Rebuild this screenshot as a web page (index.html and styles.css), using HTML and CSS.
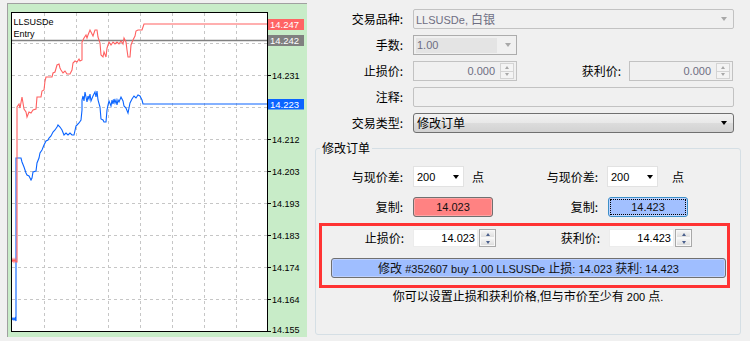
FILE: index.html
```html
<!DOCTYPE html>
<html lang="zh">
<head>
<meta charset="utf-8">
<title>修改订单</title>
<link rel="stylesheet" href="styles.css">
</head>
<body>
<div class="app">
  <div class="chart">
    <svg class="chart-svg" width="299" height="333" viewBox="8 4 299 333" xmlns="http://www.w3.org/2000/svg">
      <rect x="11.5" y="12.5" width="256" height="319" fill="#fff" stroke="none"/>
      <g stroke="#c6c6c6" stroke-width="1" stroke-dasharray="3 3">
        <line x1="44.5" y1="13" x2="44.5" y2="331"/>
        <line x1="76.5" y1="13" x2="76.5" y2="331"/>
        <line x1="108.5" y1="13" x2="108.5" y2="331"/>
        <line x1="140.5" y1="13" x2="140.5" y2="331"/>
        <line x1="172.5" y1="13" x2="172.5" y2="331"/>
        <line x1="204.5" y1="13" x2="204.5" y2="331"/>
        <line x1="236.5" y1="13" x2="236.5" y2="331"/>
        <line x1="12" y1="43.5" x2="267" y2="43.5"/>
        <line x1="12" y1="75.5" x2="267" y2="75.5"/>
        <line x1="12" y1="107.5" x2="267" y2="107.5"/>
        <line x1="12" y1="139.5" x2="267" y2="139.5"/>
        <line x1="12" y1="171.5" x2="267" y2="171.5"/>
        <line x1="12" y1="203.5" x2="267" y2="203.5"/>
        <line x1="12" y1="235.5" x2="267" y2="235.5"/>
        <line x1="12" y1="267.5" x2="267" y2="267.5"/>
        <line x1="12" y1="299.5" x2="267" y2="299.5"/>
      </g>
      <line x1="12" y1="40.5" x2="267" y2="40.5" stroke="#808080" stroke-width="1.3"/>
      <polyline fill="none" stroke="#0a64ff" stroke-width="1.1" points="12,320 13,318 14,320 15,318 16,321 16,158 21,158 22,162 24,167 26,173 27,175 29,176 31,180 32,178 33,172 36,171 37,163 39,158 40,153 42,150 44,145 46,141 48,140 49,138 51,136 53,132 55,130 57,127 58,125 60,127 62,130 64,135 66,133 68,135 70,133 72,135 74,135 76,126 77,125 79,123 81,120 82,110 82,100 83,96 84,101 85,92 86,97 87,102 88,96 89,99 90,94 91,101 93,96 95,92 96,97 97,91 98,100 100,107 101,119 103,120 104,122 106,122 107,110 108,105 109,101 111,106 112,100 113,104 114,99 115,103 116,100 117,105 118,100 119,102 121,97 123,101 124,106 126,108 128,113 130,103 132,99 134,96 136,98 138,95 140,96 141,98 142,100 143,104 267,104"/>
      <polyline fill="none" stroke="#ff6060" stroke-width="1.1" points="12,262 13,259 14,262 15,259 16,262 17,262 17,107 19,104 20,108 22,97 23,103 24,109 26,112 27,117 29,112 31,113 33,110 36,109 37,97 41,97 42,91 44,90 45,81 46,77 52,77 53,73 55,72 57,65 59,64 60,68 61,70 63,73 65,71 67,74 70,74 72,70 73,63 75,61 77,62 79,59 80,61 82,60 82,42 84,38 86,35 87,38 88,35 90,30 92,34 93,36 95,30 97,30 98,37 100,43 101,55 103,57 104,52 106,57 107,48 109,42 111,45 113,42 115,44 117,42 119,44 121,41 123,44 124,38 126,42 127,50 128,57 130,57 131,45 133,40 135,36 136,31 138,30 142,30 144,24 267,24"/>
      <rect x="11.5" y="12.5" width="256" height="319" fill="none" stroke="#000" stroke-width="1"/>
      <g stroke="#000" stroke-width="1">
        <line x1="268" y1="43.5" x2="271" y2="43.5"/>
        <line x1="268" y1="75.5" x2="271" y2="75.5"/>
        <line x1="268" y1="107.5" x2="271" y2="107.5"/>
        <line x1="268" y1="139.5" x2="271" y2="139.5"/>
        <line x1="268" y1="171.5" x2="271" y2="171.5"/>
        <line x1="268" y1="203.5" x2="271" y2="203.5"/>
        <line x1="268" y1="235.5" x2="271" y2="235.5"/>
        <line x1="268" y1="267.5" x2="271" y2="267.5"/>
        <line x1="268" y1="299.5" x2="271" y2="299.5"/>
        <line x1="268" y1="331.5" x2="271" y2="331.5"/>
      </g>
      <g class="axis">
        <text x="272" y="79">14.231</text>
        <text x="272" y="143">14.212</text>
        <text x="272" y="175">14.203</text>
        <text x="272" y="207">14.193</text>
        <text x="272" y="239">14.183</text>
        <text x="272" y="271">14.174</text>
        <text x="272" y="303">14.164</text>
        <text x="272" y="333">14.155</text>
      </g>
      <text class="axis" x="13.5" y="24.5">LLSUSDe</text>
      <text class="axis" x="13.5" y="37">Entry</text>
      <rect x="268" y="19" width="36" height="11" fill="#ff6464"/>
      <text class="tag" x="270" y="28">14.247</text>
      <rect x="268" y="35" width="36" height="11" fill="#808080"/>
      <text class="tag" x="270" y="44">14.242</text>
      <rect x="268" y="99" width="36" height="10.5" fill="#0a64ff"/>
      <text class="tag" x="270" y="108">14.223</text>
    </svg>
  </div>

  <div class="form">
    <div class="row">
      <span class="lbl">交易品种:</span>
      <div class="field combo-off w-wide">
        <span class="dis-text">LLSUSDe, <span class="zh">白银</span></span>
        <span class="tri tri-gray"></span>
      </div>
    </div>
    <div class="row">
      <span class="lbl">手数:</span>
      <div class="field combo-qty">
        <span class="qty-box dis-text">1.00</span>
        <span class="tri tri-gray"></span>
      </div>
    </div>
    <div class="row">
      <span class="lbl">止损价:</span>
      <div class="field spin-off">
        <span class="spin-val dis-text">0.000</span>
        <span class="spin-btns off"><span class="sb"><i class="tri-up"></i></span><span class="sb"><i class="tri-dn"></i></span></span>
      </div>
      <span class="lbl lbl-r">获利价:</span>
      <div class="field spin-off">
        <span class="spin-val dis-text">0.000</span>
        <span class="spin-btns off"><span class="sb"><i class="tri-up"></i></span><span class="sb"><i class="tri-dn"></i></span></span>
      </div>
    </div>
    <div class="row">
      <span class="lbl">注释:</span>
      <div class="field input-off w-wide"></div>
    </div>
    <div class="row">
      <span class="lbl">交易类型:</span>
      <div class="field combo-on w-wide">
        <span class="zh">修改订单</span>
        <span class="tri tri-black"></span>
      </div>
    </div>

    <fieldset class="group">
      <legend class="zh">修改订单</legend>
      <div class="grow row-a">
        <span class="lbl g1">与现价差:</span>
        <div class="field combo-white"><span>200</span><span class="tri tri-black"></span></div>
        <span class="lbl pt">点</span>
        <span class="lbl g2">与现价差:</span>
        <div class="field combo-white"><span>200</span><span class="tri tri-black"></span></div>
        <span class="lbl pt2">点</span>
      </div>
      <div class="grow row-b">
        <span class="lbl g1">复制:</span>
        <button class="btn btn-red" type="button">14.023</button>
        <span class="lbl g3">复制:</span>
        <button class="btn btn-blue" type="button"><span class="focus">14.423</span></button>
      </div>
      <div class="highlight">
        <div class="grow row-c">
          <span class="lbl g4">止损价:</span>
          <div class="spin-on">
            <span class="spin-input">14.023</span>
            <span class="spin-btns on"><span class="sb"><i class="tri-up"></i></span><span class="sb"><i class="tri-dn"></i></span></span>
          </div>
          <span class="lbl g5">获利价:</span>
          <div class="spin-on">
            <span class="spin-input">14.423</span>
            <span class="spin-btns on"><span class="sb"><i class="tri-up"></i></span><span class="sb"><i class="tri-dn"></i></span></span>
          </div>
        </div>
        <button class="btn btn-main" type="button"><span class="zh">修改</span> #352607 buy 1.00 LLSUSDe <span class="zh">止损</span>: 14.023 <span class="zh">获利</span>: 14.423</button>
      </div>
      <p class="note"><span class="zh">你可以设置止损和获利价格</span>,<span class="zh">但与市价至少有</span> 200 <span class="zh">点</span>.</p>
    </fieldset>
  </div>
</div>
</body>
</html>
```

FILE: styles.css
```css
* { box-sizing: border-box; }
html, body { margin: 0; padding: 0; }
body {
  width: 750px;
  height: 341px;
  overflow: hidden;
  background: #f0f0f0;
  color: #000;
  font-family: "Liberation Sans", "Noto Sans CJK SC", sans-serif;
  font-size: 11px;
  line-height: 14px;
}
.app { display: flex; align-items: flex-start; }

/* chart */
.chart {
  flex: none;
  margin: 3px 0 0 7px;
  width: 300px;
  height: 334px;
  border-top: 1px solid #a0a0a0;
  border-left: 1px solid #a0a0a0;
  background: #c8ecc8;
}
.chart-svg { display: block; }
.axis { font-family: "Liberation Sans", sans-serif; font-size: 9px; fill: #000; }
.tag { font-family: "Liberation Sans", sans-serif; font-size: 9.5px; fill: #fff; }

/* form */
.form {
  flex: none;
  width: 443px;
  padding-top: 9px;
  display: flex;
  flex-direction: column;
}
.zh { font-family: "Noto Sans CJK SC", sans-serif; font-size: 12px; }
.row { display: flex; align-items: center; height: 20px; margin-bottom: 6px; }
.lbl {
  flex: none;
  font-family: "Noto Sans CJK SC", sans-serif;
  font-size: 12px;
  line-height: 16px;
  text-align: right;
  white-space: nowrap;
}
.row > .lbl:first-child { width: 96px; margin-right: 10px; }
.lbl-r { width: 104px; margin-right: 8px; }

.field { display: flex; align-items: center; height: 20px; }
.w-wide { width: 321px; }
.dis-text { color: #6e6e82; }

.combo-off {
  border: 1px solid #c2c2c2;
  border-radius: 2px;
  background: #f0f0f0;
  padding-left: 2px;
}
.combo-qty {
  width: 104px;
  border: 1px solid #acacac;
  background: #f0f0f0;
  padding: 1px 2px;
}
.qty-box {
  width: 81px;
  height: 15px;
  background: #e4e4e4;
  padding-left: 1px;
  line-height: 15px;
}
.input-off {
  border: 1px solid #c2c2c2;
  border-radius: 2px;
  background: #f0f0f0;
}
.combo-on {
  border: 1px solid #707070;
  border-radius: 3px;
  background: linear-gradient(#f2f2f2, #e8e8e8 50%, #dcdcdc 51%, #d2d2d2);
  padding-left: 3px;
}
.combo-white {
  width: 51px;
  height: 21px;
  border: 1px solid #e2e2e2;
  background: #fff;
  padding-left: 3px;
}
.combo-white .tri { margin-right: 4px; }

.tri {
  margin-left: auto;
  margin-right: 6px;
  width: 0;
  height: 0;
  border-left: 3.5px solid transparent;
  border-right: 3.5px solid transparent;
  border-top: 4px solid #000;
}
.tri-gray { border-top-color: #a8a8a8; }
.tri-black { border-top-color: #000; }
.combo-qty .tri { margin-right: 3px; }

/* spinners */
.spin-off {
  width: 104px;
  border: 1px solid #c2c2c2;
  background: #f0f0f0;
  padding: 1px 2px 1px 2px;
}
.spin-val { flex: 1; text-align: right; padding-right: 5px; }
.spin-btns { flex: none; display: flex; flex-direction: column; }
.spin-btns.off { width: 14px; height: 16px; }
.sb {
  flex: 1;
  display: flex;
  align-items: center;
  justify-content: center;
  border: 1px solid #d4d4d4;
  background: #f4f4f4;
}
.sb + .sb { border-top: none; }
.tri-up, .tri-dn {
  display: block;
  width: 0;
  height: 0;
  border-left: 2.5px solid transparent;
  border-right: 2.5px solid transparent;
}
.tri-up { border-bottom: 3px solid #a8a8a8; }
.tri-dn { border-top: 3px solid #a8a8a8; }
.spin-btns.on .tri-up { border-bottom-color: #4a5f8c; }
.spin-btns.on .tri-dn { border-top-color: #4a5f8c; }

/* group */
.group {
  margin: 1px 0 0 8px;
  width: 426px;
  height: 195px;
  border: 1px solid #d5dfe5;
  border-radius: 3px;
  padding: 10px 0 0 0;
  min-width: 0;
}
.group legend {
  margin-left: 4px;
  padding: 0 2px;
  line-height: 16px;
}
.grow { display: flex; align-items: center; }
.row-a { height: 21px; }
.row-b { height: 20px; margin-top: 10px; }
.g1 { width: 87px; margin-right: 10px; }
.pt { margin-left: 8px; width: 12px; text-align: left; }
.g2 { width: 114px; margin-right: 9px; }
.pt2 { margin-left: 14px; }
.g3 { width: 105px; margin-right: 10px; }

.btn {
  font: inherit;
  color: #111;
  margin: 0;
  padding: 0;
  cursor: default;
}
.btn-red {
  width: 80px;
  height: 20px;
  border: 1px solid #707070;
  border-radius: 3px;
  background: #ff8282;
  box-shadow: inset 0 0 0 1px #ffa3a3;
}
.btn-blue {
  width: 80px;
  height: 20px;
  border: 1px solid #3c8fc8;
  border-radius: 3px;
  background: #a2c0ff;
  box-shadow: inset 0 0 0 1px #c0d4ff;
  padding: 2px;
}
.focus {
  display: flex;
  align-items: center;
  justify-content: center;
  height: 100%;
  outline: 1px dotted #000;
}

.highlight {
  margin: 6px 0 0 3px;
  width: 411px;
  border: 3px solid #ff3333;
  padding: 3px 1px 7px 9px;
  display: flex;
  flex-direction: column;
}
.row-c { height: 18px; margin-left: -9px; }
.g4 { width: 82px; margin-right: 9px; }
.g5 { width: 104px; margin-right: 9px; }
.spin-on { display: flex; height: 18px; }
.spin-input {
  width: 65px;
  height: 18px;
  background: #fff;
  border: 1px solid #ececec;
  text-align: right;
  padding-right: 2px;
  line-height: 16px;
}
.spin-btns.on {
  width: 17px;
  height: 18px;
  margin-left: 1px;
  border: 1px solid #a8a8a8;
  background: #e8e8e8;
}
.spin-btns.on .sb {
  border: 1px solid #f8f8f8;
  background: linear-gradient(#f4f4f4, #dedede);
}
.btn-main {
  margin-top: 11px;
  width: 395px;
  height: 20px;
  border: 1px solid #707070;
  border-radius: 3px;
  background: #9fbeff;
  box-shadow: inset 0 0 0 1px #bcd0ff;
  text-align: center;
  white-space: nowrap;
}
.note {
  margin: 0;
  text-align: center;
  line-height: 16px;
  white-space: nowrap;
}
```
